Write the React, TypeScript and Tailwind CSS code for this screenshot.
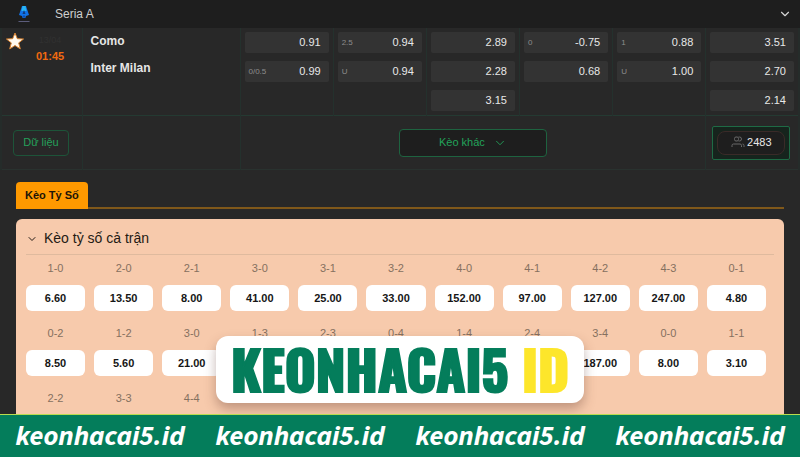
import { useState } from "react";
import { ChevronDown } from "lucide-react";
import clsx from "clsx";

type Odd = { line?: string; price: string };

const teams = ["Como", "Inter Milan"];

const markets: Odd[][] = [
    [{ price: "0.91" }, { line: "0/0.5", price: "0.99" }],
    [{ line: "2.5", price: "0.94" }, { line: "U", price: "0.94" }],
    [{ price: "2.89" }, { price: "2.28" }, { price: "3.15" }],
    [{ line: "0", price: "-0.75" }, { price: "0.68" }],
    [{ line: "1", price: "0.88" }, { line: "U", price: "1.00" }],
    [{ price: "3.51" }, { price: "2.70" }, { price: "2.14" }],
];

const scores: [string, string?][] = [
    ["1-0", "6.60"], ["2-0", "13.50"], ["2-1", "8.00"], ["3-0", "41.00"], ["3-1", "25.00"], ["3-2", "33.00"],
    ["4-0", "152.00"], ["4-1", "97.00"], ["4-2", "127.00"], ["4-3", "247.00"], ["0-1", "4.80"],
    ["0-2", "8.50"], ["1-2", "5.60"], ["3-0", "21.00"], ["1-3"], ["2-3"], ["0-4"],
    ["1-4"], ["2-4"], ["3-4", "187.00"], ["0-0", "8.00"], ["1-1", "3.10"],
    ["2-2"], ["3-3"], ["4-4"],
];

const siteLinks = [1, 2, 3, 4];

function LeagueLogo() {
    return (
        <svg viewBox="0 0 16 18" className="h-[18px] w-4" aria-hidden="true">
            <path d="M6 1h4l3 9-3 1-.6 2h-2.800L6 11l-3-1z" fill="#1173e8" />
            <path d="M6.500 1h3l1 5H5.500z" fill="#27b4f5" />
            <path d="M8 5l1.500 4h-3z" fill="#123a78" />
            <path d="M8 10l1.500 1.500L8 13l-1.500-1.500z" fill="#0c4fb0" />
            <path d="M2.500 16.500h11" stroke="#5c5d7c" />
        </svg>
    );
}

function StarIcon() {
    return (
        <svg viewBox="0 0 18 18" className="size-[18px]" aria-hidden="true">
            <path
                d="M9 1l2.300 5.700 6.200.3-4.800 3.900 1.600 6L9 13.500l-5.300 3.400 1.600-6L.5 7l6.200-.3z"
                fill="#fffaf0"
                stroke="#d9822f"
                strokeLinejoin="round"
            />
        </svg>
    );
}

function PeopleIcon() {
    return (
        <svg viewBox="0 0 14 13" className="h-[13px] w-3.5" fill="none" stroke="#686868" aria-hidden="true">
            <rect x="3.500" y="1" width="4" height="4" rx="1.500" />
            <path d="M7.500 1h1a2 2 0 0 1 0 4h-1M1 11V9.500Q1 8 2.500 8H9q1.500 0 1.500 1.500V11M11.500 8q1.500 0 1.500 1.500V11" />
        </svg>
    );
}

function OddButton({ line, price }: Odd) {
    return (
        <button className="flex h-[21px] w-full items-center justify-between rounded-xs bg-[#333333] pr-2 pl-1">
            <span className="text-[8px] text-[#8d8d8d]">{line}</span>
            <span className="text-[11px] text-[#e8e8e8]">{price}</span>
        </button>
    );
}

export default function App() {
    const [open, setOpen] = useState(true);

    return (
        <div className="flex h-screen flex-col overflow-hidden bg-[#282828] font-['Liberation_Sans',sans-serif]">
            <main className="relative min-h-0 flex-1 overflow-hidden">
                {/* League */}
                <header className="flex h-7 items-center bg-[#1e1e1e] pr-2 pl-4">
                    <LeagueLogo />
                    <h1 className="ml-[23px] text-[12px] text-[#cfcfcf]">Seria A</h1>
                    <button aria-label="Toggle league" className="ml-auto text-[#d5d5d5]">
                        <ChevronDown className="size-3.5" strokeWidth={2} />
                    </button>
                </header>

                {/* Match odds */}
                <table className="w-full table-fixed border-x-2 border-[#252c2a]">
                    <colgroup>
                        <col className="w-[81px]" />
                        <col className="w-[158px]" />
                        {markets.map((_, i) => (
                            <col key={i} />
                        ))}
                    </colgroup>
                    <tbody>
                        <tr className="border-b border-[#243a32] align-top">
                            <td className="border-r border-[#24312d]">
                                <div className="flex gap-3 pt-1 pl-1">
                                    <button aria-label="Favourite" className="self-start">
                                        <StarIcon />
                                    </button>
                                    <time className="text-[11px] leading-4 font-bold text-[#f26a10]">
                                        <span className="block text-center text-[9px] font-normal text-[#313131]">13/04</span>
                                        01:45
                                    </time>
                                </div>
                            </td>
                            <td className="border-r border-[#24312d] pt-1 pl-2">
                                {teams.map((team) => (
                                    <div key={team} className="mb-[9px] text-[12px] leading-[18px] font-bold text-[#e6e6e6]">
                                        {team}
                                    </div>
                                ))}
                            </td>
                            {markets.map((odds, i) => (
                                <td key={i} className="border-r border-[#24312d] px-1 pt-1 pb-1">
                                    <div className="flex flex-col gap-2">
                                        {odds.map((odd, j) => (
                                            <OddButton key={j} {...odd} />
                                        ))}
                                    </div>
                                </td>
                            ))}
                        </tr>
                        <tr className="h-[54px] border-b border-[#29322f]">
                            <td className="border-r border-[#24312d] pl-[11px]">
                                <button className="h-[26px] w-14 rounded-sm border border-[#1d5439] text-[11px] text-[#25a05a]">
                                    Dữ liệu
                                </button>
                            </td>
                            <td className="border-r border-[#24312d]" />
                            <td colSpan={5} className="border-r border-[#24312d] text-center">
                                <button className="inline-flex h-7 w-[148px] items-center justify-center gap-2 rounded-sm border border-[#1e6340] bg-[#1e1e1e] align-middle text-[11px] text-[#22a35a]">
                                    Kèo khác
                                    <ChevronDown className="size-3.5" strokeWidth={1.5} />
                                </button>
                            </td>
                            <td className="px-1.5">
                                <button className="block h-[34px] w-[78px] rounded-xs border border-[#1e6b45] bg-[#16241d] p-1">
                                    <span className="flex h-full items-center justify-center gap-0.5 rounded-lg border border-[#3a2a28] bg-[#1e1e1e] text-[11px] text-[#e8e8e8]">
                                        <PeopleIcon />
                                        2483
                                    </span>
                                </button>
                            </td>
                        </tr>
                    </tbody>
                </table>

                {/* Correct score */}
                <section className="px-4 pt-3">
                    <div role="tablist" className="flex border-b-2 border-[#80581a]">
                        <button
                            role="tab"
                            aria-selected="true"
                            className="-mb-0.5 h-[27px] rounded-t-sm bg-[#ff9900] px-[9px] text-[11px] font-bold text-[#1c1408]"
                        >
                            Kèo Tỷ Số
                        </button>
                    </div>

                    <div className="mt-[10px] h-[300px] rounded-t-md bg-[#f7caac] px-[10px]">
                        <button
                            onClick={() => setOpen(!open)}
                            aria-expanded={open}
                            className="flex h-9 w-full items-center gap-1.5 border-b border-[#dfba9e] pt-1 text-[14px] text-[#241a14]"
                        >
                            <ChevronDown className={clsx("size-3", !open && "-rotate-90")} strokeWidth={2} />
                            Kèo tỷ số cả trận
                        </button>

                        {open && (
                            <div className="mr-2 grid grid-cols-11 gap-x-[9px] gap-y-2 pt-[5px]">
                                {scores.map(([score, price], i) => (
                                    <button key={i} className="flex h-[57px] flex-col items-center">
                                        <span className="h-[25px] text-[11px] leading-4 text-[#85705f]">{score}</span>
                                        {price && (
                                            <span className="h-[26px] w-full rounded-md bg-white text-[11px] leading-[26px] font-bold text-[#161616]">
                                                {price}
                                            </span>
                                        )}
                                    </button>
                                ))}
                            </div>
                        )}
                    </div>
                </section>

                {/* Brand plate over the score grid */}
                <div className="absolute bottom-[11px] left-1/2 flex h-[67px] w-[368px] -translate-x-1/2 items-center justify-center rounded-xl bg-white pb-0.5 shadow-[0_6px_12px_rgba(90,50,40,0.35)]">
                    <strong className="font-['Oswald','Anton',sans-serif] text-[53px] leading-none font-black whitespace-nowrap text-[#047d5b] [-webkit-text-stroke:2px_currentColor]">
                        KEONHACAI5 <span className="text-[#fde62b]">ID</span>
                    </strong>
                </div>
            </main>

            <footer className="grid h-[43px] shrink-0 grid-cols-4 items-center border-t border-[#b9dc4f] bg-[#047d5b]">
                {siteLinks.map((n) => (
                    <a
                        key={n}
                        href="#"
                        className="text-center font-['Source_Sans_3','Open_Sans',sans-serif] text-[28px] leading-8 font-bold text-white italic"
                    >
                        keonhacai5.id
                    </a>
                ))}
            </footer>
        </div>
    );
}
